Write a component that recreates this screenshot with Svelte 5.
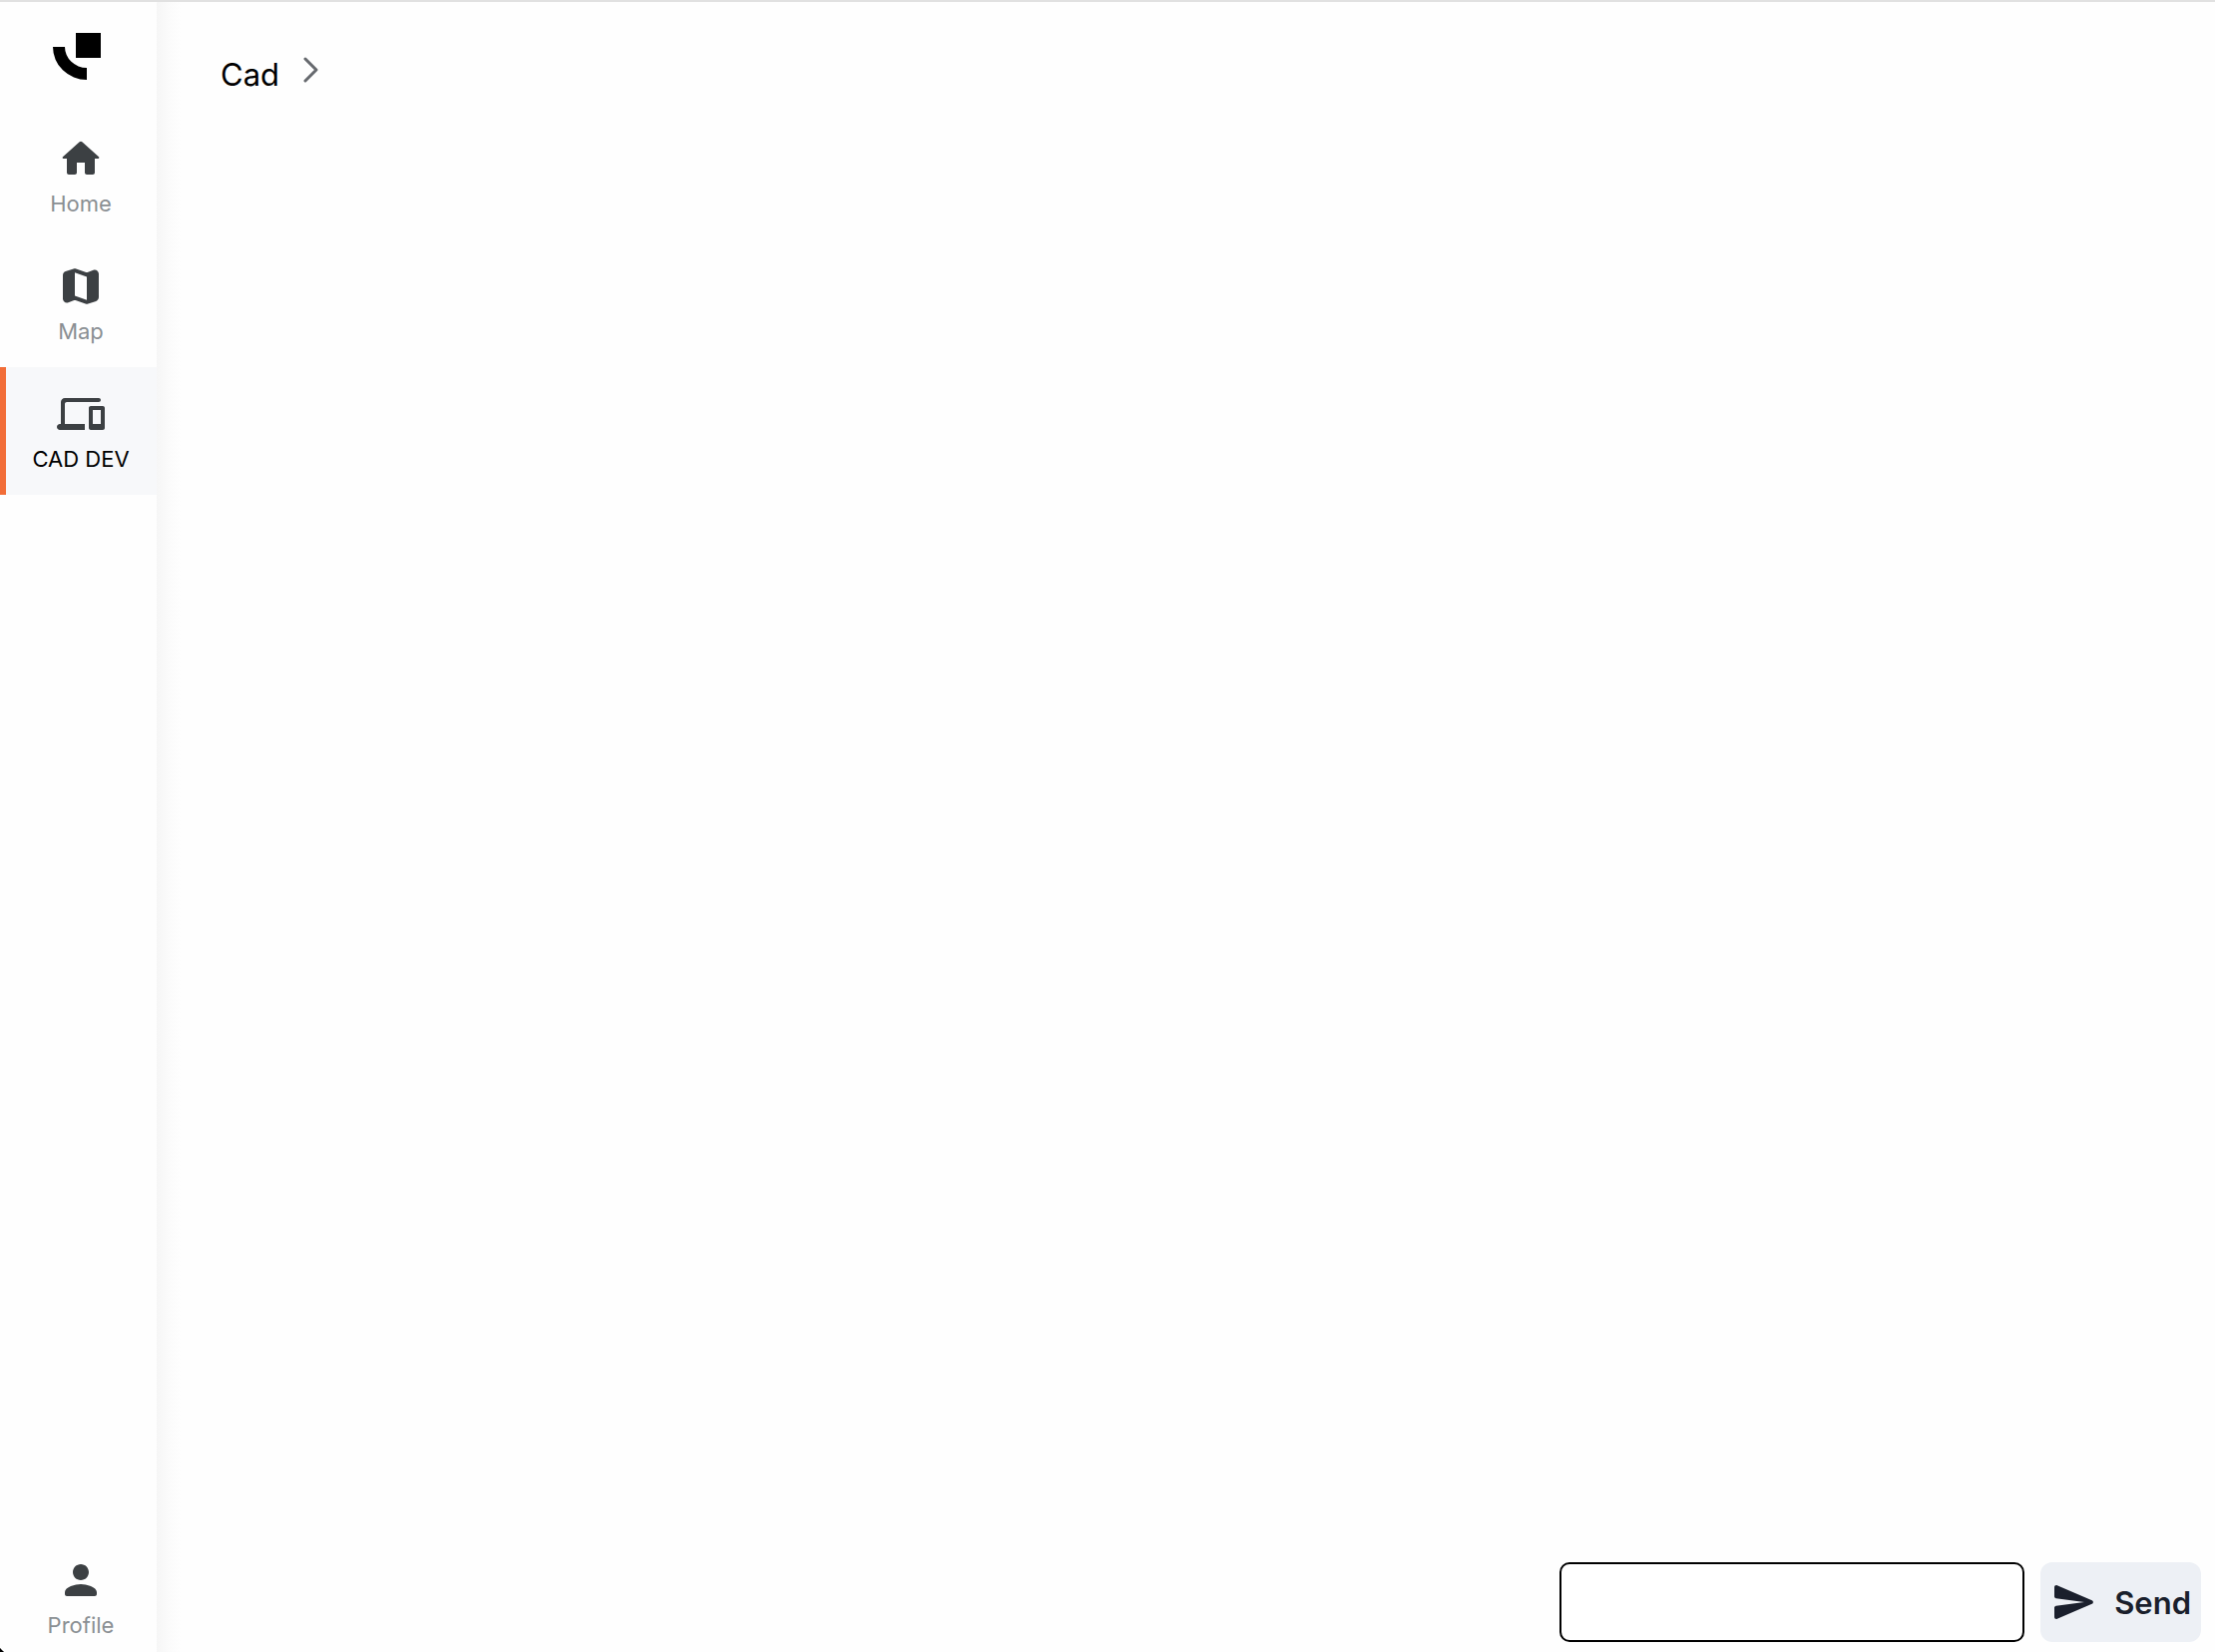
<script lang="ts">
	interface NavItem {
		label: string;
		href: string;
		icon: string;
	}

	const items: NavItem[] = [
		{
			label: 'Home',
			href: '#home',
			icon: 'M10 19v-5h4v5c0 .55.45 1 1 1h3c.55 0 1-.45 1-1v-7h1.7c.46 0 .68-.57.33-.87L12.67 3.6c-.38-.34-.96-.34-1.34 0l-8.36 7.53c-.34.3-.13.87.33.87H5v7c0 .55.45 1 1 1h3c.55 0 1-.45 1-1z'
		},
		{
			label: 'Map',
			href: '#map',
			icon: 'M14.65 4.98l-5-1.75c-.42-.15-.88-.15-1.3-.01L4.36 4.56C3.55 4.84 3 5.6 3 6.46v11.85c0 1.41 1.41 2.37 2.72 1.86l2.93-1.14c.22-.09.47-.09.69-.01l5 1.75c.42.15.88.15 1.3.01l3.99-1.34c.81-.27 1.36-1.04 1.36-1.9V5.69c0-1.41-1.41-2.37-2.72-1.86l-2.93 1.14c-.22.08-.46.09-.69.01zM15 18.89l-6-2.11V5.11l6 2.11v11.67z'
		},
		{
			label: 'CAD DEV',
			href: '#cad',
			icon: 'M4 7c0-.55.45-1 1-1h16c.55 0 1-.45 1-1s-.45-1-1-1H4c-1.1 0-2 .9-2 2v11h-.5c-.83 0-1.5.67-1.5 1.5S.67 20 1.5 20H14v-3H4V7zm19 1h-6c-.55 0-1 .45-1 1v10c0 .55.45 1 1 1h6c.55 0 1-.45 1-1V9c0-.55-.45-1-1-1zm-1 9h-4v-7h4v7z'
		}
	];

	const profile: NavItem = {
		label: 'Profile',
		href: '#profile',
		icon: 'M12 12c2.21 0 4-1.79 4-4s-1.79-4-4-4-4 1.79-4 4 1.79 4 4 4zm0 2c-2.67 0-8 1.34-8 4v1c0 .55.45 1 1 1h14c.55 0 1-.45 1-1v-1c0-2.66-5.33-4-8-4z'
	};

	let active = $state('CAD DEV');
	let message = $state('');

	function send(e: SubmitEvent) {
		e.preventDefault();
		message = '';
	}
</script>

{#snippet navLink(item: NavItem)}
	<a class="nav-item" class:active={active === item.label} href={item.href} onclick={() => (active = item.label)}>
		<svg class="icon" viewBox="0 0 24 24" aria-hidden="true"><path d={item.icon} /></svg>
		<span>{item.label}</span>
	</a>
{/snippet}

<div class="app">
	<nav class="sidebar">
		<a class="logo" href="#home" aria-label="Start">
			<svg viewBox="0 0 48 48" aria-hidden="true">
				<path d="M23 0h25v25H23z" />
				<path d="M0 14h12a22 21 0 0 0 22 21v12a34 33 0 0 1-34-33z" />
			</svg>
		</a>
		{#each items as item}
			{@render navLink(item)}
		{/each}
		<div class="bottom">
			{@render navLink(profile)}
		</div>
	</nav>

	<main>
		<header class="breadcrumb">
			<span>Cad</span>
			<svg viewBox="0 0 16 26" aria-hidden="true"><path d="M2 2l11 11L2 24" /></svg>
		</header>

		<form class="composer" onsubmit={send}>
			<input type="text" aria-label="Message" bind:value={message} />
			<button type="submit">
				<svg class="icon" viewBox="0 0 24 24" aria-hidden="true">
					<path d="M3.4 20.4l17.45-7.48c.81-.35.81-1.49 0-1.84L3.4 3.6c-.66-.29-1.39.2-1.39.91L2 9.12c0 .5.37.93.87.99L17 12 2.87 13.88c-.5.07-.87.5-.87 1l.01 4.61c0 .71.73 1.2 1.39.91z" />
				</svg>
				Send
			</button>
		</form>
	</main>
</div>

<style>
	:global(body) {
		margin: 0;
		font-family: Inter, 'Liberation Sans', sans-serif;
		background: #fefefe;
		color: #000;
	}

	.app {
		display: flex;
		box-sizing: border-box;
		min-height: 100vh;
		border-top: 2px solid #e1e1e1;
		position: relative;
	}

	/* rounded corner of the window */
	.app::after {
		content: '';
		position: absolute;
		left: 0;
		bottom: 0;
		width: 20px;
		height: 20px;
		background: radial-gradient(circle at 100% 0, transparent 25px, #000 26px);
		pointer-events: none;
	}

	.sidebar {
		display: flex;
		flex-direction: column;
		flex: none;
		width: 157px;
		background: #fefefe;
	}

	.logo {
		display: flex;
		height: 79px;
		padding: 31px 0 0 53px;
	}

	.logo svg {
		width: 48px;
		height: 48px;
	}

	.icon {
		flex: none;
		width: 48px;
		height: 48px;
		fill: currentColor;
	}

	.nav-item {
		display: flex;
		flex-direction: column;
		align-items: center;
		gap: 5px;
		box-sizing: border-box;
		height: 128px;
		padding: 23px 1px 20px 0;
		border-left: 6px solid transparent;
		font-size: 22px;
		line-height: 32px;
		color: #8a8f93;
		text-decoration: none;
	}

	.nav-item .icon {
		color: #3c4043;
	}

	.nav-item.active {
		background: #f7f8fa;
		border-color: #f26d38;
		color: #000;
	}

	.bottom {
		margin-top: auto;
		height: 119px;
	}

	main {
		display: flex;
		flex-direction: column;
		justify-content: space-between;
		flex: 1;
		background: linear-gradient(to right, #f6f6f6, #fbfbfb 12px, #fefefe 24px);
	}

	.breadcrumb {
		display: flex;
		align-items: flex-start;
		gap: 24px;
		padding: 53px 64px;
		font-size: 31px;
		line-height: 40px;
	}

	.breadcrumb svg {
		width: 16px;
		height: 26px;
		margin-top: 2px;
		fill: none;
		stroke: #66696e;
		stroke-width: 3;
		stroke-linecap: round;
		stroke-linejoin: round;
	}

	.composer {
		display: flex;
		justify-content: flex-end;
		gap: 16px;
		padding: 0 14px 10px;
	}

	input {
		box-sizing: border-box;
		width: 466px;
		height: 80px;
		padding: 0 16px;
		border: 2px solid #000;
		border-radius: 10px;
		background: #fff;
		font: inherit;
		font-size: 31px;
	}

	button {
		display: flex;
		align-items: center;
		gap: 16px;
		height: 80px;
		padding: 0 10px;
		border: none;
		border-radius: 12px;
		background: #edf0f5;
		color: #1a1f2c;
		font: inherit;
		font-size: 31px;
		font-weight: 600;
		cursor: pointer;
	}
</style>
